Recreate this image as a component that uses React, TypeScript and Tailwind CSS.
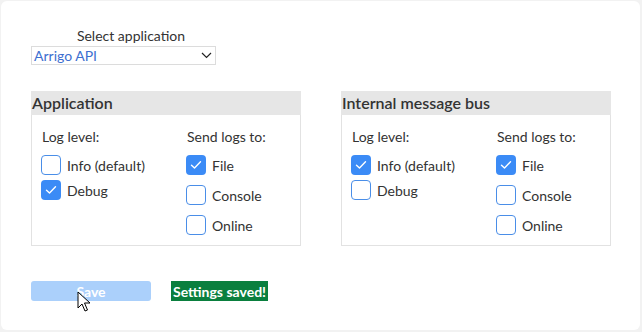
import React from "react";

function Box({ checked }: { checked: boolean }) {
  return checked ? (
    <div className="w-[20px] h-[20px] rounded-[4px] bg-[#3b8bf6] flex items-center justify-center shrink-0">
      <svg width="12" height="10" viewBox="0 0 12 10" fill="none">
        <path d="M1.5 5.2 L4.5 8 L10.5 1.8" stroke="white" strokeWidth="1.4" strokeLinecap="round" strokeLinejoin="round" />
      </svg>
    </div>
  ) : (
    <div className="w-[20px] h-[20px] rounded-[4px] border border-[#4a8ee8] bg-white shrink-0" />
  );
}

function Item({ label, checked }: { label: string; checked: boolean }) {
  return (
    <div className="flex items-center gap-[6px] h-[20px]">
      <Box checked={checked} />
      <span className="text-[14px] text-[#333]">{label}</span>
    </div>
  );
}

function Panel({ title, info, debug }: { title: string; info: boolean; debug: boolean }) {
  return (
    <div className="w-[270px] flex flex-col">
      <div className="h-[24px] bg-[#e6e6e6] pl-[1px] flex items-center text-[16px] font-semibold text-[#333]">{title}</div>
      <div className="h-[131px] border border-t-0 border-[#e2e2e2] flex pl-[9px] pt-[14px]">
        <div className="w-[145px] flex flex-col">
          <div className="h-[14px] flex items-center pl-[1px] text-[14px] text-[#333]">Log level:</div>
          <div className="flex flex-col gap-[5px] mt-[12px]">
            <Item label="Info (default)" checked={info} />
            <Item label="Debug" checked={debug} />
          </div>
        </div>
        <div className="flex flex-col">
          <div className="h-[14px] flex items-center pl-[1px] text-[14px] text-[#333]">Send logs to:</div>
          <div className="flex flex-col gap-[10px] mt-[12px]">
            <Item label="File" checked={true} />
            <Item label="Console" checked={false} />
            <Item label="Online" checked={false} />
          </div>
        </div>
      </div>
    </div>
  );
}

export default function App() {
  return (
    <div className="w-[642px] h-[332px] bg-[#f2f2f2] p-px" style={{ fontFamily: "Lato, 'Open Sans', sans-serif" }}>
      <div className="relative w-[639px] h-[329px] bg-white rounded-[6px] pl-[30px] pt-[26px]">
        <div className="w-[200px] text-center text-[14px] leading-[17px] text-[#333]">Select application</div>
        <div className="mt-[2px] w-[185px] h-[19px] border border-[#dcdcdc] flex items-center justify-between pl-[2px] pr-[3px]">
          <span className="text-[14px] text-[#3d6fd0]">Arrigo API</span>
          <svg width="11" height="7" viewBox="0 0 11 7" fill="none">
            <path d="M1 1 L5.5 5.5 L10 1" stroke="#222" strokeWidth="1.2" />
          </svg>
        </div>
        <div className="flex gap-[40px] mt-[26px]">
          <Panel title="Application" info={false} debug={true} />
          <Panel title="Internal message bus" info={true} debug={false} />
        </div>
        <div className="flex gap-[20px] mt-[35px]">
          <button className="w-[120px] h-[20px] rounded-[3px] bg-[#abd0fb] text-white font-bold text-[14px] flex items-center justify-center">Save</button>
          <div className="h-[20px] px-[2px] bg-[#0a7f3e] text-white font-bold text-[14px] flex items-center">Settings saved!</div>
        </div>
        <svg className="absolute left-[76px] top-[290px]" width="14" height="22" viewBox="0 0 14 22">
          <path d="M1 1 L1 17 L5 13 L8 20 L10.5 19 L7.5 12 L13 12 Z" fill="white" stroke="black" strokeWidth="1" strokeLinejoin="round" />
        </svg>
      </div>
    </div>
  );
}
